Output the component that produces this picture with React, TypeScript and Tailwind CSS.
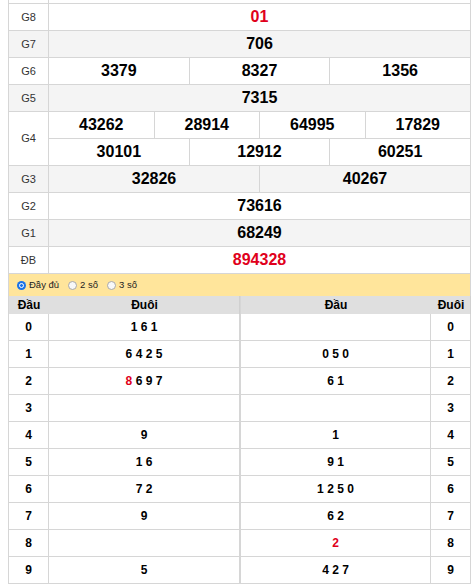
const RED = 'text-[#e0001b]';

const TAILS_LEFT: { head: string; tails: { d: string; red?: boolean }[] }[] = [
  { head: '0', tails: [{ d: '1' }, { d: '6' }, { d: '1' }] },
  { head: '1', tails: [{ d: '6' }, { d: '4' }, { d: '2' }, { d: '5' }] },
  { head: '2', tails: [{ d: '8', red: true }, { d: '6' }, { d: '9' }, { d: '7' }] },
  { head: '3', tails: [] },
  { head: '4', tails: [{ d: '9' }] },
  { head: '5', tails: [{ d: '1' }, { d: '6' }] },
  { head: '6', tails: [{ d: '7' }, { d: '2' }] },
  { head: '7', tails: [{ d: '9' }] },
  { head: '8', tails: [] },
  { head: '9', tails: [{ d: '5' }] },
];

const HEADS_RIGHT: { tail: string; heads: { d: string; red?: boolean }[] }[] = [
  { tail: '0', heads: [] },
  { tail: '1', heads: [{ d: '0' }, { d: '5' }, { d: '0' }] },
  { tail: '2', heads: [{ d: '6' }, { d: '1' }] },
  { tail: '3', heads: [] },
  { tail: '4', heads: [{ d: '1' }] },
  { tail: '5', heads: [{ d: '9' }, { d: '1' }] },
  { tail: '6', heads: [{ d: '1' }, { d: '2' }, { d: '5' }, { d: '0' }] },
  { tail: '7', heads: [{ d: '6' }, { d: '2' }] },
  { tail: '8', heads: [{ d: '2', red: true }] },
  { tail: '9', heads: [{ d: '4' }, { d: '2' }, { d: '7' }] },
];

const cell = 'border-r border-b border-[#d6d6d6] flex items-center justify-center';
const label = 'text-[11px] text-[#333]';
const num = 'text-[16px] font-bold text-black';

function Digits({ list }: { list: { d: string; red?: boolean }[] }) {
  return (
    <span>
      {list.map((x, i) => (
        <span key={i} className={x.red ? RED : ''}>
          {i > 0 ? ' ' : ''}
          {x.d}
        </span>
      ))}
    </span>
  );
}

function Radio({ checked, text }: { checked?: boolean; text: string }) {
  return (
    <div className="flex items-center gap-[3px]">
      {checked ? (
        <span className="w-[9px] h-[9px] rounded-full bg-[#1a73e8] flex items-center justify-center">
          <span className="w-[5px] h-[5px] rounded-full bg-[#1a73e8] border border-white" />
        </span>
      ) : (
        <span className="w-[9px] h-[9px] rounded-full border border-[#a8a8a8] bg-[#f8f8f8]" />
      )}
      <span className="text-[9.5px] text-[#222]">{text}</span>
    </div>
  );
}

export default function App() {
  return (
    <div className="bg-white w-[473px] h-[586px] overflow-hidden" style={{ fontFamily: '"Liberation Sans", Arial, sans-serif' }}>
      <div className="ml-[8px] w-[463px]">
        {/* prize table */}
        <div className="grid grid-cols-[40px_repeat(12,minmax(0,1fr))] grid-rows-[4px_repeat(10,27px)] border-l border-[#d6d6d6]">
          <div className="col-span-1 border-r border-b border-[#d6d6d6]" />
          <div className="col-span-12 border-r border-b border-[#d6d6d6]" />

          <div className={`${cell} ${label}`}>G8</div>
          <div className={`${cell} col-span-12 text-[16px] font-bold ${RED}`}>01</div>

          <div className={`${cell} ${label} bg-[#f4f4f4]`}>G7</div>
          <div className={`${cell} ${num} col-span-12 bg-[#f4f4f4]`}>706</div>

          <div className={`${cell} ${label}`}>G6</div>
          <div className={`${cell} ${num} col-span-4`}>3379</div>
          <div className={`${cell} ${num} col-span-4`}>8327</div>
          <div className={`${cell} ${num} col-span-4`}>1356</div>

          <div className={`${cell} ${label} bg-[#f4f4f4]`}>G5</div>
          <div className={`${cell} ${num} col-span-12 bg-[#f4f4f4]`}>7315</div>

          <div className={`${cell} ${label} row-span-2`}>G4</div>
          <div className={`${cell} ${num} col-span-3`}>43262</div>
          <div className={`${cell} ${num} col-span-3`}>28914</div>
          <div className={`${cell} ${num} col-span-3`}>64995</div>
          <div className={`${cell} ${num} col-span-3`}>17829</div>
          <div className={`${cell} ${num} col-span-4`}>30101</div>
          <div className={`${cell} ${num} col-span-4`}>12912</div>
          <div className={`${cell} ${num} col-span-4`}>60251</div>

          <div className={`${cell} ${label} bg-[#f4f4f4]`}>G3</div>
          <div className={`${cell} ${num} col-span-6 bg-[#f4f4f4]`}>32826</div>
          <div className={`${cell} ${num} col-span-6 bg-[#f4f4f4]`}>40267</div>

          <div className={`${cell} ${label}`}>G2</div>
          <div className={`${cell} ${num} col-span-12`}>73616</div>

          <div className={`${cell} ${label} bg-[#f4f4f4]`}>G1</div>
          <div className={`${cell} ${num} col-span-12 bg-[#f4f4f4]`}>68249</div>

          <div className={`${cell} ${label}`}>ĐB</div>
          <div className={`${cell} col-span-12 text-[16px] font-bold ${RED}`}>894328</div>
        </div>

        {/* options bar */}
        <div className="h-[22px] bg-[#ffe59b] border-x border-[#d6d6d6] flex items-center pl-[8px] gap-[9px]">
          <Radio checked text="Đầy đủ" />
          <Radio text="2 số" />
          <Radio text="3 số" />
        </div>

        {/* head / tail tables */}
        <div className="flex">
          <div className="w-[232px] border-l border-[#d6d6d6]">
            <div className="grid grid-cols-[40px_191px] h-[18px] bg-[#dfdfdf] border-r border-[#d0d0d0] text-[12px] font-bold text-black">
              <div className="flex items-center justify-center">Đầu</div>
              <div className="flex items-center justify-center">Đuôi</div>
            </div>
            {TAILS_LEFT.map((r) => (
              <div key={r.head} className="grid grid-cols-[40px_191px] h-[27px] text-[12px] font-bold text-black">
                <div className={cell}>{r.head}</div>
                <div className={cell}>
                  <Digits list={r.tails} />
                </div>
              </div>
            ))}
          </div>
          <div className="w-[231px] border-l border-[#d6d6d6]">
            <div className="grid grid-cols-[190px_40px] h-[18px] bg-[#dfdfdf] border-r border-[#d0d0d0] text-[12px] font-bold text-black">
              <div className="flex items-center justify-center">Đầu</div>
              <div className="flex items-center justify-center">Đuôi</div>
            </div>
            {HEADS_RIGHT.map((r) => (
              <div key={r.tail} className="grid grid-cols-[190px_40px] h-[27px] text-[12px] font-bold text-black">
                <div className={cell}>
                  <Digits list={r.heads} />
                </div>
                <div className={cell}>{r.tail}</div>
              </div>
            ))}
          </div>
        </div>
      </div>
    </div>
  );
}
